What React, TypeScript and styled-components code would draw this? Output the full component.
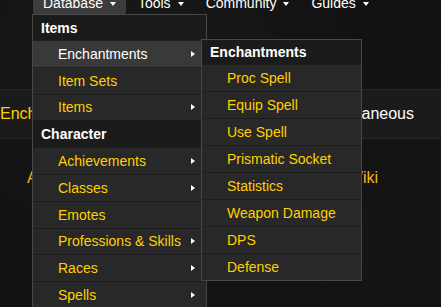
import React from "react";
import styled, { createGlobalStyle } from "styled-components";

const GlobalStyle = createGlobalStyle`
  html, body {
    margin: 0;
    padding: 0;
    background: #121212;
    font-family: "Liberation Sans", Arial, sans-serif;
    overflow: hidden;
  }
`;

const Page = styled.div`
  width: 441px;
  height: 307px;
  overflow: hidden;
  position: relative;
  background:
    radial-gradient(ellipse at 30% 20%, rgba(40, 40, 40, 0.35), transparent 60%),
    radial-gradient(ellipse at 80% 80%, rgba(30, 30, 30, 0.3), transparent 60%),
    #111111;
`;

const NavBar = styled.nav`
  display: flex;
  gap: 2px;
  margin: -8px 0 0 33px;
  position: relative;
  z-index: 5;
`;

const NavTab = styled.div<{ $active?: boolean }>`
  position: relative;
  display: flex;
  align-items: center;
  padding: 0 10px;
  line-height: 22px;
  height: 22px;
  font-size: 14px;
  color: #ffffff;
  background: ${(p) => (p.$active ? "#3c3c3c" : "transparent")};
`;

const Caret = styled.span`
  display: inline-block;
  width: 0;
  height: 0;
  margin-left: 7px;
  margin-top: 1px;
  border-top: 4px solid #ffffff;
  border-left: 3.5px solid transparent;
  border-right: 3.5px solid transparent;
`;

const Menu = styled.div<{ $width: number }>`
  position: absolute;
  box-sizing: border-box;
  width: ${(p) => p.$width}px;
  border: 1px solid #484848;
  background: #282828;
  font-size: 14px;
`;

const MainMenu = styled(Menu)`
  top: 22px;
  left: -1px;
`;

const SubMenu = styled(Menu)`
  top: -2px;
  left: 168px;
  z-index: 2;
`;

const MenuHeader = styled.div<{ $h: number; $sep?: boolean }>`
  box-sizing: content-box;
  height: ${(p) => p.$h}px;
  display: flex;
  align-items: center;
  padding-left: 8px;
  background: #1b1b1b;
  border-top: ${(p) => (p.$sep ? "1px solid #1b1b1b" : "none")};
  color: #ffffff;
  font-weight: bold;
`;

const MenuRow = styled.div<{ $h: number; $hover?: boolean }>`
  position: relative;
  height: ${(p) => p.$h}px;
  display: flex;
  align-items: center;
  padding-left: 25px;
  border-top: 1px solid #1d1d1d;
  background: ${(p) => (p.$hover ? "#393939" : "#282828")};
  color: ${(p) => (p.$hover ? "#ffffff" : "#ffd100")};
  white-space: nowrap;
`;

const Arrow = styled.span`
  margin-left: auto;
  margin-right: 11px;
  width: 0;
  height: 0;
  border-left: 4px solid #ffffff;
  border-top: 3.5px solid transparent;
  border-bottom: 3.5px solid transparent;
`;

const Band = styled.div`
  margin-top: 75px;
  height: 50px;
  box-sizing: border-box;
  display: flex;
  align-items: center;
  background: #1b1b1b;
  border-top: 1px solid #262626;
  border-bottom: 1px solid #262626;
  font-size: 16px;
  line-height: 48px;
  padding-right: 27px;
`;

const BandTab = styled.span<{ $active?: boolean }>`
  color: ${(p) => (p.$active ? "#ffd100" : "#ffffff")};
  &:last-child {
    margin-left: auto;
  }
`;

const LinksRow = styled.div`
  margin-top: 29px;
  display: flex;
  font-size: 16px;
  line-height: 20px;
  padding: 0 63px 0 27px;
  color: #f4b41a;
`;

const LinkItem = styled.span`
  &:last-child {
    margin-left: auto;
  }
`;

const subItems = [
  "Proc Spell",
  "Equip Spell",
  "Use Spell",
  "Prismatic Socket",
  "Statistics",
  "Weapon Damage",
  "DPS",
  "Defense",
];

type Entry =
  | { kind: "header"; label: string }
  | { kind: "row"; label: string; arrow?: boolean; hover?: boolean; sub?: boolean };

const mainEntries: Entry[] = [
  { kind: "header", label: "Items" },
  { kind: "row", label: "Enchantments", arrow: true, hover: true, sub: true },
  { kind: "row", label: "Item Sets" },
  { kind: "row", label: "Items", arrow: true },
  { kind: "header", label: "Character" },
  { kind: "row", label: "Achievements", arrow: true },
  { kind: "row", label: "Classes", arrow: true },
  { kind: "row", label: "Emotes" },
  { kind: "row", label: "Professions & Skills", arrow: true },
  { kind: "row", label: "Races", arrow: true },
  { kind: "row", label: "Spells", arrow: true },
];

export default function App() {
  return (
    <>
      <GlobalStyle />
      <Page>
        <NavBar>
          <NavTab $active>
            Database
            <Caret />
            <MainMenu $width={175}>
              {mainEntries.map((e, i) =>
                e.kind === "header" ? (
                  <MenuHeader key={i} $h={i === 0 ? 25 : 25.8} $sep={i !== 0}>
                    {e.label}
                  </MenuHeader>
                ) : (
                  <MenuRow key={i} $h={25.8} $hover={e.hover}>
                    {e.label}
                    {e.arrow && <Arrow />}
                    {e.sub && (
                      <SubMenu $width={161}>
                        <MenuHeader $h={24}>Enchantments</MenuHeader>
                        {subItems.map((s) => (
                          <MenuRow key={s} $h={26}>
                            {s}
                          </MenuRow>
                        ))}
                      </SubMenu>
                    )}
                  </MenuRow>
                )
              )}
            </MainMenu>
          </NavTab>
          <NavTab>
            Tools
            <Caret />
          </NavTab>
          <NavTab>
            Community
            <Caret />
          </NavTab>
          <NavTab>
            Guides
            <Caret />
          </NavTab>
        </NavBar>
        <Band>
          <BandTab $active>Enchantments</BandTab>
          <BandTab>Miscellaneous</BandTab>
        </Band>
        <LinksRow>
          <LinkItem>Armory</LinkItem>
          <LinkItem>Wiki</LinkItem>
        </LinksRow>
      </Page>
    </>
  );
}
